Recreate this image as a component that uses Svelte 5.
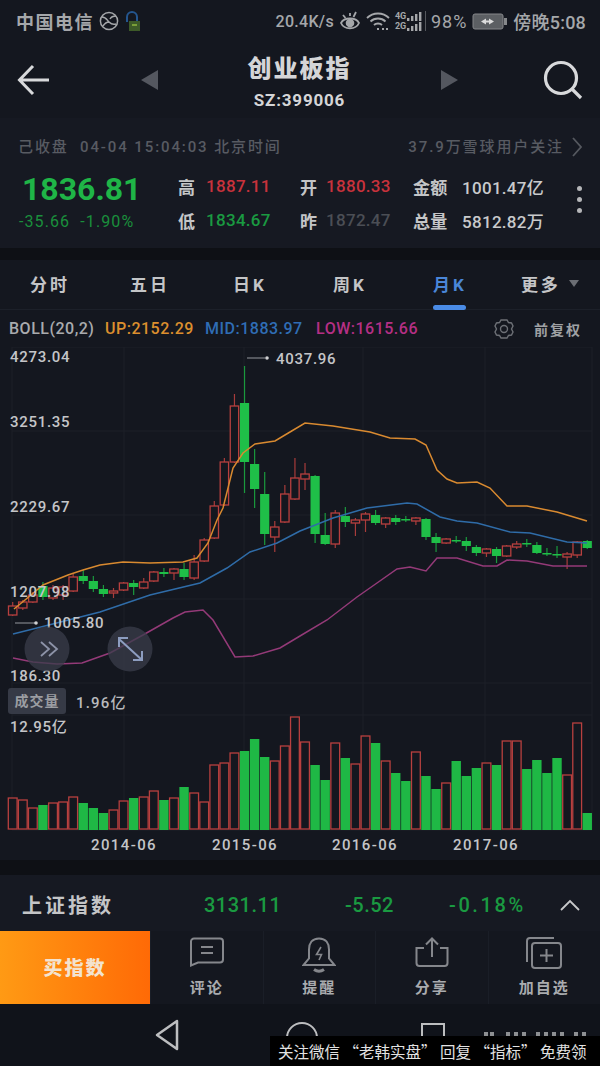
<script lang="ts">
	// 每根K线：[类型, 实体上沿, 实体下沿, 上影线, 下影线]，坐标直接用页面像素
	type Candle = [string, number, number, number, number];

	const candles: Candle[] = [
		['r', 606, 615, 602, 616], ['r', 602, 608, 600, 610], ['r', 595, 602, 592, 603], ['g', 586, 597, 582, 600],
		['r', 588, 598, 585, 600], ['r', 587, 595, 585, 600], ['r', 577, 591, 574, 592], ['g', 576, 581, 570, 584],
		['g', 581, 589, 576, 592], ['g', 589, 594, 585, 597], ['r', 591, 593, 588, 598], ['r', 583, 590, 582, 591],
		['g', 583, 587, 580, 595], ['r', 582, 588, 578, 589], ['r', 572, 581, 571, 582], ['g', 572, 574, 568, 577],
		['r', 569, 573, 568, 580], ['g', 569, 577, 563, 580], ['r', 562, 578, 555, 580], ['r', 540, 561, 538, 562],
		['r', 506, 538, 501, 539], ['r', 462, 505, 458, 506], ['r', 406, 462, 394, 463], ['g', 403, 462, 366, 493],
		['g', 464, 489, 449, 508], ['g', 494, 534, 472, 545], ['r', 527, 537, 521, 552], ['r', 494, 522, 485, 523],
		['r', 478, 499, 458, 500], ['r', 474, 479, 463, 490], ['g', 476, 534, 475, 543], ['g', 535, 544, 513, 545],
		['r', 513, 544, 510, 548], ['g', 516, 522, 507, 527], ['r', 520, 523, 518, 536], ['r', 514, 520, 512, 532],
		['g', 515, 523, 510, 525], ['r', 518, 524, 517, 528], ['g', 518, 522, 515, 525], ['g', 519, 520, 516, 522],
		['r', 518, 521, 517, 525], ['g', 519, 537, 518, 540], ['g', 537, 543, 533, 552], ['r', 539, 543, 538, 544],
		['g', 540, 541, 536, 543], ['g', 541, 546, 537, 551], ['g', 547, 553, 545, 556], ['r', 549, 553, 548, 557],
		['g', 549, 556, 547, 563], ['r', 546, 556, 545, 557], ['r', 544, 547, 541, 549], ['g', 543, 544, 539, 547],
		['g', 545, 553, 542, 554], ['g', 553, 554, 548, 556], ['g', 554, 555, 546, 558], ['r', 554, 557, 552, 569],
		['r', 542, 555, 541, 558], ['g', 541, 548, 540, 549]
	];

	// 成交量柱顶部 (页面像素)
	const volumes: [string, number][] = [
		['r', 798], ['r', 800], ['r', 808], ['g', 805], ['r', 803], ['r', 802], ['r', 797], ['g', 803],
		['g', 808], ['g', 813], ['r', 810], ['r', 801], ['g', 798], ['r', 797], ['r', 791], ['g', 800],
		['r', 798], ['g', 787], ['r', 793], ['r', 802], ['r', 765], ['r', 763], ['r', 753], ['g', 751],
		['g', 739], ['g', 757], ['r', 761], ['r', 746], ['r', 717], ['r', 742], ['g', 765], ['g', 780],
		['r', 743], ['g', 758], ['r', 764], ['r', 736], ['g', 743], ['r', 761], ['g', 773], ['g', 781],
		['r', 752], ['g', 776], ['g', 789], ['r', 783], ['g', 761], ['g', 776], ['g', 768], ['r', 763],
		['g', 765], ['r', 741], ['r', 741], ['g', 769], ['g', 760], ['g', 773], ['g', 758], ['r', 775],
		['r', 723], ['g', 813]
	];

	const upLine = [[14,609],[25,600],[43,585],[68,575],[83,570],[100,565],[123,562],[150,563],[183,562],[197,558],[208,543],[217,520],[223,508],[233,468],[243,453],[255,444],[275,441],[290,432],[305,423],[333,426],[370,432],[390,438],[415,439],[426,445],[437,470],[447,479],[457,483],[477,482],[490,488],[507,506],[527,506],[557,512],[587,521]];
	const midLine = [[13,634],[33,629],[100,612],[150,595],[200,583],[227,568],[250,552],[277,543],[300,531],[333,518],[367,508],[407,503],[417,504],[440,517],[457,521],[477,523],[510,532],[530,533],[567,542],[587,543]];
	const lowLine = [[13,658],[33,662],[57,664],[82,663],[110,653],[143,635],[173,618],[185,612],[203,610],[213,620],[235,657],[253,656],[280,648],[300,636],[327,620],[357,597],[377,583],[397,569],[410,567],[426,571],[437,558],[457,558],[483,566],[497,566],[507,560],[527,561],[553,566],[587,566]];

	const toPoints = (line: number[][]) => line.map((p) => p.join(',')).join(' ');
	const barX = (i: number) => 12.7 + i * 10.08;

	const yAxis = [
		{ label: '4273.04', y: 362 },
		{ label: '3251.35', y: 427 },
		{ label: '2229.67', y: 512 },
		{ label: '1207.98', y: 597 },
		{ label: '186.30', y: 681 }
	];
	const xAxis = [
		{ label: '2014-06', x: 124 },
		{ label: '2015-06', x: 245 },
		{ label: '2016-06', x: 365 },
		{ label: '2017-06', x: 486 }
	];
	const gridX = [12, 124, 244, 363, 485, 592];
	const gridY = [347, 431, 515, 599, 683, 715, 830];

	// 信号格
	const signalBars = [0, 1, 2, 3];

	// 水印上方露出的笔画
	const peekMarks = [0, 6, 22, 30, 38, 52, 60, 68, 76, 90, 98];

	const tabs = ['分时', '五日', '日K', '周K', '月K', '更多'];
	const active = '月K';
	const bg = '#14171f';
</script>

<div class="page">
	<div class="status">
		<div class="status-left">
			<span class="carrier">中国电信</span>
			<svg width="20" height="20" viewBox="0 0 20 20" fill="none" stroke="#a5a7aa" stroke-width="1.5">
				<circle cx="10" cy="10" r="8.6" />
				<path d="M3 6c4 0 5 3 7 5s4 3 7 2M4 15c2-3 4-4 6-4M11 8c1-2 3-3 6-3" />
			</svg>
			<svg width="18" height="22" viewBox="0 0 18 22" fill="none">
				<path d="M3 12V7a5 5 0 0 1 10 0v5" stroke="#24568f" stroke-width="2" />
				<rect x="5" y="11" width="11" height="10" fill="#3d5a28" />
				<path d="M8 15h5" stroke="#8fb63e" stroke-width="1.5" />
			</svg>
		</div>
		<div class="status-right">
			<span class="speed">20.4K/s</span>
			<svg width="22" height="22" viewBox="0 0 22 22" fill="none" stroke="#a5a7aa" stroke-width="1.8">
				<path d="M2 13c3-6 15-6 18 0-3 7-15 7-18 0z" />
				<circle cx="11" cy="13" r="3.4" fill="#a5a7aa" />
				<path d="M4 5l2.500 3M17 2l-2.500 5M11 3v3" />
			</svg>
			<svg width="24" height="20" viewBox="0 0 24 20" fill="none" stroke="#a5a7aa" stroke-width="1.8">
				<path d="M1 7c6-6 16-6 22 0M4.500 10.500c4-4 11-4 15 0M8 14c2-2 6-2 8 0" />
				<path d="M11 18h2M16 18h2M20 18h2" />
			</svg>
			<div class="net">
				{#each ['4G', '2G'] as name}
					<div class="net-row">
						<span>{name}</span>
						<svg width="15" height="9" viewBox="0 0 15 9">
							{#each signalBars as n}
								<rect x={n * 4} y={6 - n * 2} width="2.4" height={3 + n * 2} fill="#a5a7aa" />
							{/each}
						</svg>
					</div>
				{/each}
			</div>
			<span class="pct">98%</span>
			<svg width="36" height="20" viewBox="0 0 36 20">
				<rect x="1" y="3" width="30" height="15" rx="2" fill="#5c5f63" stroke="#85878a" />
				<rect x="32" y="7" width="3" height="7" fill="#85878a" />
				<path d="M9 10.500l5-3v2h3v-2l5 3-5 3v-2h-3v2z" fill="#dcdcdc" />
			</svg>
			<span class="clock">傍晚5:08</span>
		</div>
	</div>

	<div class="nav">
		<svg class="back" width="34" height="32" viewBox="0 0 34 32" fill="none" stroke="#d8d9db" stroke-width="3">
			<path d="M32 16H3M16 2L2.500 16 16 30" />
		</svg>
		<div class="tri tri-left"></div>
		<div class="nav-title">
			<h1>创业板指</h1>
			<p>SZ:399006</p>
		</div>
		<div class="tri tri-right"></div>
		<svg class="search" width="40" height="40" viewBox="0 0 40 40" fill="none" stroke="#d8d9db" stroke-width="3.2">
			<circle cx="18" cy="18" r="15.5" />
			<path d="M29 29l9 9" />
		</svg>
	</div>

	<div class="info">
		<div class="info-top">
			<span>己收盘&nbsp; 04-04 15:04:03 北京时间</span>
			<span class="follow">
				37.9万雪球用户关注
				<svg width="11" height="20" viewBox="0 0 11 20" fill="none" stroke="#55585f" stroke-width="1.8">
					<path d="M1 1l8 9-8 9" />
				</svg>
			</span>
		</div>
		<div class="info-main">
			<div class="price">
				<div class="last">1836.81</div>
				<div class="change">-35.66&nbsp; -1.90%</div>
			</div>
			<div class="quotes">
				<span class="q-name">高</span><span class="red">1887.11</span>
				<span class="q-name">开</span><span class="red">1880.33</span>
				<span class="q-name">金额</span><span class="white">1001.47亿</span>
				<span class="q-name">低</span><span class="green">1834.67</span>
				<span class="q-name">昨</span><span class="dim">1872.47</span>
				<span class="q-name">总量</span><span class="white">5812.82万</span>
			</div>
			<div class="dots"><i></i><i></i><i></i></div>
		</div>
	</div>

	<div class="gap"></div>

	<div class="tabs">
		{#each tabs as tab}
			<div class="tab" class:on={tab === active}>
				{tab}
				{#if tab === '更多'}<span class="more-arrow"></span>{/if}
			</div>
		{/each}
	</div>

	<div class="boll">
		<span class="b-name">BOLL(20,2)</span>
		<span class="b-up">UP:2152.29</span>
		<span class="b-mid">MID:1883.97</span>
		<span class="b-low">LOW:1615.66</span>
		<svg class="gear" width="22" height="22" viewBox="0 0 22 22" fill="none" stroke="#6d7076" stroke-width="1.4">
			<path d="M8 2h6l1.500 2.500 3 .5 1.500 3-1.500 3 1.500 3-1.500 3-3 .5L14 20H8l-1.500-2.500-3-.5L2 14l1.500-3L2 8l1.500-3 3-.5z" />
			<circle cx="11" cy="11" r="3.500" />
		</svg>
		<span class="b-adj">前复权</span>
	</div>

	<div class="chart">
		<svg width="600" height="513" viewBox="0 347 600 513">
			{#each gridX as x}
				<line x1={x} x2={x} y1="347" y2="830" stroke="#1c2029" />
			{/each}
			{#each gridY as y}
				<line x1="12" x2="592" y1={y} y2={y} stroke="#1c2029" />
			{/each}

			{#each candles as [kind, top, bottom, wickTop, wickBottom], i}
				{@const color = kind === 'r' ? '#b8403f' : '#1fbf48'}
				<line x1={barX(i)} x2={barX(i)} y1={wickTop} y2={wickBottom} stroke={kind === 'r' ? '#a83c3b' : '#1a9a3d'} stroke-width="1.2" />
				{#if kind === 'r'}
					<rect x={barX(i) - 4.2} y={top} width="8.4" height={bottom - top} fill={bg} stroke={color} stroke-width="1.3" />
				{:else}
					<rect x={barX(i) - 4.6} y={top} width="9.2" height={Math.max(bottom - top, 1.5)} fill={color} />
				{/if}
			{/each}

			<polyline points={toPoints(midLine)} fill="none" stroke="#2f6ca8" stroke-width="1.5" />
			<polyline points={toPoints(lowLine)} fill="none" stroke="#943a78" stroke-width="1.5" />
			<polyline points={toPoints(upLine)} fill="none" stroke="#d98a30" stroke-width="1.5" />

			{#each yAxis as tick}
				<text class="axis" x="10" y={tick.y}>{tick.label}</text>
			{/each}

			<line x1="247" x2="265" y1="358" y2="358" stroke="#777a80" stroke-width="1.3" />
			<circle cx="267" cy="358" r="1.8" fill="#d0d1d3" />
			<text class="axis" x="276" y="364">4037.96</text>

			<line x1="15" x2="35" y1="623" y2="623" stroke="#777a80" stroke-width="1.3" />
			<circle cx="36" cy="623" r="1.8" fill="#d0d1d3" />
			<text class="axis" x="44" y="628">1005.80</text>

			<circle cx="47" cy="649" r="22.5" fill="#3a3e4b" fill-opacity="0.75" />
			<path d="M41 642l8 7-8 7M49 642l8 7-8 7" fill="none" stroke="#8d93a8" stroke-width="1.8" />
			<circle cx="130" cy="649" r="22.5" fill="#3a3e4b" fill-opacity="0.75" />
			<path d="M119 639l23 21M119 647v-9h9M142 651v9h-9" fill="none" stroke="#8d9dc0" stroke-width="2" />

			{#each volumes as [kind, top], i}
				{#if kind === 'r'}
					<rect x={barX(i) - 4.4} y={top} width="8.8" height={829 - top} fill={bg} stroke="#b8403f" stroke-width="1.3" />
				{:else}
					<rect x={barX(i) - 4.7} y={top} width="9.4" height={830 - top} fill="#1fb845" />
				{/if}
			{/each}

			<text class="axis" x="10" y="732">12.95亿</text>

			{#each xAxis as tick}
				<text class="axis date" x={tick.x} y="850" text-anchor="middle">{tick.label}</text>
			{/each}
		</svg>
		<div class="vol-tag"><span>成交量</span><em>1.96亿</em></div>
	</div>

	<div class="gap gap-low"></div>

	<div class="index-row">
		<span class="i-name">上证指数</span>
		<span class="i-last">3131.11</span>
		<span class="i-chg">-5.52</span>
		<span class="i-pct">-0.18%</span>
		<svg width="20" height="12" viewBox="0 0 20 12" fill="none" stroke="#c8c9cb" stroke-width="1.8">
			<path d="M1 11l9-9 9 9" />
		</svg>
	</div>

	<div class="actions">
		<div class="buy">买指数</div>
		<div class="action">
			<div class="a-icon">
				<svg width="34" height="30" viewBox="0 0 34 30" fill="none" stroke="#85878c" stroke-width="2">
					<path d="M4 1.500h26a3 3 0 0 1 3 3v18a3 3 0 0 1-3 3H8l-7 3V4.500a3 3 0 0 1 3-3z" />
					<path d="M11 10h12M11 16h12" />
				</svg>
			</div>
			<span>评论</span>
		</div>
		<div class="action">
			<div class="a-icon">
				<svg width="34" height="36" viewBox="0 0 34 36" fill="none" stroke="#85878c" stroke-width="2">
					<path d="M17 1.500c-7 0-10 5-10 11v9l-5.500 6.500h31L27 21.500v-9c0-6-3-11-10-11z" />
					<path d="M12 32.500c3 2 7 2 10 0" stroke-width="3" />
					<path d="M19 10l-4.500 7.500h5L17 23" stroke-width="1.6" />
				</svg>
			</div>
			<span>提醒</span>
		</div>
		<div class="action">
			<div class="a-icon">
				<svg width="34" height="31" viewBox="0 0 34 31" fill="none" stroke="#85878c" stroke-width="2">
					<path d="M9 11H1.500v15a3 3 0 0 0 3 3h25a3 3 0 0 0 3-3V11H25" />
					<path d="M17 20V2M11 7.500l6-6 6 6" />
				</svg>
			</div>
			<span>分享</span>
		</div>
		<div class="action">
			<div class="a-icon">
				<svg width="36" height="32" viewBox="0 0 36 32" fill="none" stroke="#85878c" stroke-width="2">
					<path d="M28 1H4a3 3 0 0 0-3 3v21" />
					<rect x="6" y="6" width="29" height="25" rx="3" />
					<path d="M20.500 12v13M14 18.500h13" />
				</svg>
			</div>
			<span>加自选</span>
		</div>
	</div>

	<div class="android">
		<svg class="soft-back" width="26" height="32" viewBox="0 0 26 32" fill="none" stroke="#bdbec0" stroke-width="2.5">
			<path d="M23 2L3 16l20 14z" stroke-linejoin="round" />
		</svg>
		<div class="soft-home"></div>
		<div class="soft-recent"></div>
		<svg class="peek" width="106" height="5" viewBox="0 0 106 5">
			{#each peekMarks as x}
				<rect {x} y="1" width="4" height="4" fill="#8d8f92" />
			{/each}
		</svg>
		<div class="watermark">关注微信 “老韩实盘” 回复 “指标” 免费领</div>
	</div>
</div>

<style>
	:global(body) {
		background: #14171f;
	}

	.page {
		width: 600px;
		height: 1066px;
		overflow: hidden;
		display: flex;
		flex-direction: column;
		background: #14171f;
		color: #c9cacc;
		font-family: Roboto, 'Noto Sans CJK SC', sans-serif;
	}

	/* 状态栏 */
	.status {
		height: 42px;
		flex-shrink: 0;
		padding: 0 14px 0 16px;
		display: flex;
		align-items: center;
		justify-content: space-between;
		color: #a5a7aa;
		box-sizing: border-box;
	}

	.status-left,
	.status-right {
		display: flex;
		align-items: center;
	}

	.status-left {
		gap: 5px;
	}

	.status-right {
		gap: 5px;
	}

	.carrier {
		font-size: 18px;
		font-weight: 700;
		letter-spacing: 1.5px;
	}

	.speed {
		font-size: 16px;
		font-weight: 500;
		letter-spacing: 0.3px;
	}

	.net {
		display: flex;
		flex-direction: column;
		width: 31px;
		font-size: 9px;
		line-height: 10px;
		font-weight: 700;
		border-right: 1px solid #55585d;
		box-sizing: border-box;
	}

	.net-row {
		display: flex;
		align-items: center;
		gap: 1px;
	}

	.pct {
		font-size: 18px;
		letter-spacing: 1px;
	}

	.clock {
		font-size: 18px;
		font-weight: 500;
		letter-spacing: 0.2px;
	}

	/* 导航 */
	.nav {
		height: 76px;
		flex-shrink: 0;
		padding: 0 17px;
		display: flex;
		align-items: center;
		box-sizing: border-box;
	}

	.tri {
		width: 0;
		height: 0;
		border-top: 10px solid transparent;
		border-bottom: 10px solid transparent;
	}

	.tri-left {
		margin-left: 90px;
		border-right: 17px solid #54575f;
	}

	.tri-right {
		border-left: 17px solid #54575f;
		margin-right: 85px;
	}

	.nav-title {
		flex: 1;
		padding-top: 4px;
		text-align: center;
	}

	.nav-title h1 {
		margin: 0;
		font-size: 24px;
		line-height: 30px;
		font-weight: 900;
		color: #d4d5d7;
		letter-spacing: 2px;
	}

	.nav-title p {
		margin: 6px 0 0;
		font-size: 17px;
		line-height: 20px;
		font-weight: 700;
		letter-spacing: 0.8px;
		color: #d4d5d7;
	}

	/* 行情信息 */
	.info {
		height: 130px;
		flex-shrink: 0;
		padding: 18px 17px 0 18px;
		box-sizing: border-box;
		background: #161922;
	}

	.info-top {
		display: flex;
		justify-content: space-between;
		align-items: center;
		font-size: 15px;
		line-height: 22px;
		letter-spacing: 1.9px;
		color: #585b62;
		font-weight: 500;
	}

	.follow {
		display: flex;
		align-items: center;
		gap: 8px;
	}

	.info-main {
		display: flex;
		margin-top: 8px;
	}

	.price {
		width: 160px;
		padding-left: 4px;
		box-sizing: border-box;
	}

	.last {
		font-size: 32px;
		line-height: 46px;
		font-weight: 700;
		color: #1fb547;
	}

	.change {
		margin-left: -3px;
		font-size: 16px;
		line-height: 20px;
		letter-spacing: 1.1px;
		color: #1a8f3c;
	}

	.quotes {
		display: grid;
		grid-template-columns: 28px 94px 26px 87px 49px 90px;
		grid-auto-rows: 34px;
		align-items: center;
		padding-top: 3px;
		font-size: 17px;
		letter-spacing: 0.3px;
		font-weight: 500;
	}

	.q-name {
		font-weight: 700;
		color: #c4c5c7;
	}

	.red {
		color: #c8323c;
	}

	.green {
		color: #1a9a41;
	}

	.dim {
		color: #4b4e55;
	}

	.white {
		color: #c9cacc;
	}

	.dots {
		margin-left: auto;
		margin-right: 1px;
		margin-top: 20px;
		display: flex;
		flex-direction: column;
		gap: 6px;
	}

	.dots i {
		width: 5px;
		height: 5px;
		border-radius: 50%;
		background: #b5b6b9;
	}

	.gap {
		height: 12px;
		flex-shrink: 0;
		background: #0e1015;
	}

	.gap-low {
		height: 15px;
	}

	/* 周期切换 */
	.tabs {
		height: 50px;
		flex-shrink: 0;
		display: flex;
		box-sizing: border-box;
		border-bottom: 1px solid #1c2029;
	}

	.tab {
		flex: 1;
		position: relative;
		text-align: center;
		font-size: 17px;
		line-height: 50px;
		font-weight: 700;
		color: #c4c5c7;
		letter-spacing: 3px;
	}

	.tab.on {
		color: #4a86d8;
	}

	.tab.on::after {
		content: '';
		position: absolute;
		left: 33px;
		width: 33px;
		bottom: -1px;
		height: 5px;
		border-radius: 3px;
		background: #4a8be6;
	}

	.more-arrow {
		display: inline-block;
		margin-left: 1px;
		vertical-align: 4px;
		border-left: 5px solid transparent;
		border-right: 5px solid transparent;
		border-top: 7px solid #6b6e74;
	}

	/* BOLL 行 */
	.boll {
		height: 37px;
		flex-shrink: 0;
		padding: 0 18px 0 9px;
		display: flex;
		align-items: center;
		box-sizing: border-box;
		font-size: 16px;
		font-weight: 500;
		letter-spacing: 0.5px;
	}

	.b-name {
		color: #a9abae;
		width: 96px;
	}

	.b-up {
		color: #dc8f2e;
		width: 100px;
	}

	.b-mid {
		color: #2f6db5;
		width: 111px;
	}

	.b-low {
		color: #b42f85;
	}

	.gear {
		margin-left: auto;
		margin-right: 19px;
	}

	.b-adj {
		font-size: 14px;
		font-weight: 700;
		letter-spacing: 2px;
		color: #9fa1a4;
	}

	/* 图表 */
	.chart {
		position: relative;
		height: 513px;
		flex-shrink: 0;
	}

	.chart svg {
		display: block;
	}

	.axis {
		font-size: 15px;
		font-weight: 500;
		letter-spacing: 0.7px;
		fill: #c4c5c8;
	}

	.date {
		letter-spacing: 1.4px;
	}

	.vol-tag {
		position: absolute;
		left: 8px;
		top: 341px;
		display: flex;
		align-items: center;
		font-size: 14px;
		font-weight: 700;
		color: #9b9da2;
	}

	.vol-tag span {
		width: 58px;
		height: 26px;
		line-height: 26px;
		text-align: center;
		background: #363a46;
		border-radius: 3px;
		letter-spacing: 1px;
	}

	.vol-tag em {
		margin-left: 10px;
		font-style: normal;
		font-size: 15px;
		font-weight: 500;
		letter-spacing: 1.2px;
		color: #b9babd;
	}

	/* 底部 */
	.index-row {
		height: 56px;
		flex-shrink: 0;
		padding: 3px 0 0 22px;
		display: flex;
		align-items: center;
		box-sizing: border-box;
		background: #161922;
		font-size: 20px;
		font-weight: 500;
		letter-spacing: 0.5px;
		color: #1a9a41;
	}

	.i-name {
		width: 182px;
		font-weight: 700;
		font-size: 20px;
		letter-spacing: 3px;
		color: #c4c5c7;
	}

	.i-last {
		width: 141px;
	}

	.i-chg {
		width: 104px;
	}

	.i-pct {
		width: 111px;
		letter-spacing: 2.6px;
	}

	.actions {
		height: 73px;
		flex-shrink: 0;
		display: flex;
	}

	.buy {
		width: 150px;
		background: linear-gradient(90deg, #ff9a14, #ff6a06);
		text-align: center;
		line-height: 76px;
		font-size: 19px;
		font-weight: 900;
		letter-spacing: 2px;
		color: #f3e3cf;
	}

	.action {
		flex: 1;
		display: flex;
		flex-direction: column;
		align-items: center;
		padding-top: 6px;
		border-left: 1px solid #1a1e27;
		font-size: 15px;
		line-height: 20px;
		font-weight: 700;
		letter-spacing: 2px;
		color: #a9abae;
	}

	.a-icon {
		height: 38px;
		margin-bottom: 3px;
		display: flex;
		align-items: flex-start;
		justify-content: center;
	}

	.android {
		flex: 1;
		position: relative;
		background: #10131a;
	}

	.soft-back {
		position: absolute;
		left: 154px;
		top: 15px;
	}

	.soft-home {
		position: absolute;
		left: 286px;
		top: 18px;
		width: 28px;
		height: 28px;
		border-radius: 50%;
		border: 2.5px solid #bdbec0;
	}

	.soft-recent {
		position: absolute;
		left: 421px;
		top: 19px;
		width: 20px;
		height: 28px;
		border: 2.5px solid #bdbec0;
	}

	.peek {
		position: absolute;
		left: 484px;
		top: 27px;
	}

	.watermark {
		position: absolute;
		left: 270px;
		right: 0;
		bottom: 0;
		height: 30px;
		background: #000;
		color: #e2e2e2;
		font-family: 'Noto Sans CJK SC', sans-serif;
		font-size: 15.5px;
		line-height: 30px;
		padding-left: 8px;
		box-sizing: border-box;
		white-space: nowrap;
		overflow: hidden;
	}
</style>
